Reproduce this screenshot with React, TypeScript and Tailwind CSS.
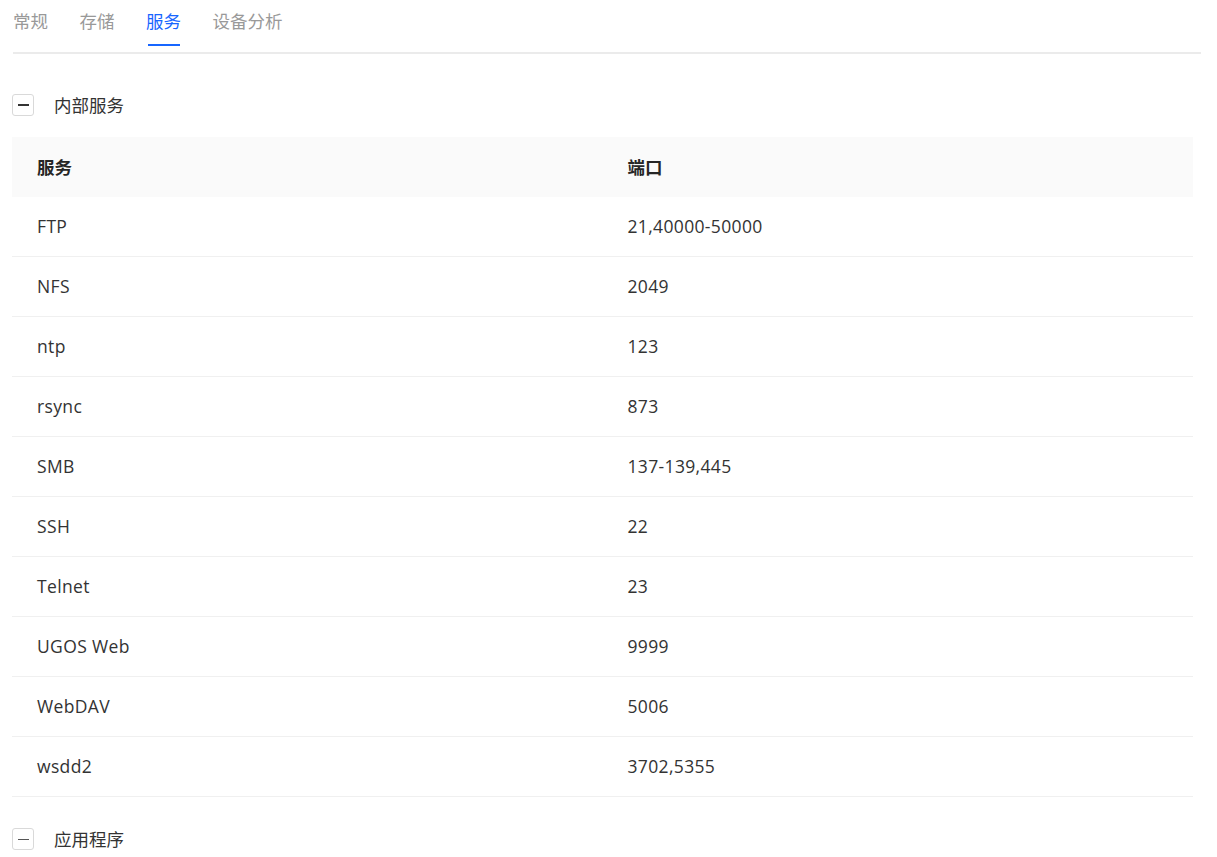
import type { ReactNode } from 'react'

const tabs = ['常规', '存储', '服务', '设备分析']

const services = [
  { name: 'FTP', port: '21,40000-50000' },
  { name: 'NFS', port: '2049' },
  { name: 'ntp', port: '123' },
  { name: 'rsync', port: '873' },
  { name: 'SMB', port: '137-139,445' },
  { name: 'SSH', port: '22' },
  { name: 'Telnet', port: '23' },
  { name: 'UGOS Web', port: '9999' },
  { name: 'WebDAV', port: '5006' },
  { name: 'wsdd2', port: '3702,5355' },
]

function Toggle({ bold }: { bold?: boolean }) {
  return (
    <button className="w-[22px] h-[22px] rounded-[3px] border border-[#d9d9d9] bg-white flex items-center justify-center shrink-0">
      <span className={bold ? 'block w-[11px] h-[2px] bg-[#333]' : 'block w-[11px] h-px bg-[#555]'} />
    </button>
  )
}

function Section({ title, bold, children }: { title: string; bold?: boolean; children?: ReactNode }) {
  return (
    <div>
      <div className="flex items-center gap-[20px] h-[22px]">
        <Toggle bold={bold} />
        <span className="text-[#333]">{title}</span>
      </div>
      {children}
    </div>
  )
}

export default function App() {
  return (
    <div
      className="min-h-screen bg-white text-[17.5px] text-[#333]"
      style={{ fontFamily: '"Open Sans", "Noto Sans CJK SC", sans-serif' }}
    >
      <div className="ml-[13px] mr-[16px] flex gap-[31.5px] border-b-2 border-[#ebebeb]">
        {tabs.map((t) => {
          const active = t === '服务'
          return (
            <div key={t} className="flex flex-col items-center pt-[9px] pb-[6px] cursor-pointer">
              <span className={`leading-[24px] ${active ? 'text-[#1766ff]' : 'text-[#999]'}`}>{t}</span>
              <span className={`mt-[11px] h-[2px] w-[32px] ${active ? 'bg-[#1766ff]' : 'bg-transparent'}`} />
            </div>
          )
        })}
      </div>

      <div className="ml-[12px] mr-[24px] pt-[40px]">
        <Section title="内部服务" bold>
          <div className="mt-[21px]">
            <div className="grid grid-cols-2 h-[60px] items-center bg-[#fafafa] font-bold text-[#262626]">
              <div className="px-[25px]">服务</div>
              <div className="px-[25px]">端口</div>
            </div>
            {services.map((s) => (
              <div
                key={s.name}
                className="grid grid-cols-2 h-[60px] items-center border-b border-[#f0f0f0] tracking-[0.35px]"
              >
                <div className="px-[25px]">{s.name}</div>
                <div className="px-[25px]">{s.port}</div>
              </div>
            ))}
          </div>
        </Section>

        <div className="mt-[31px]">
          <Section title="应用程序" />
        </div>
      </div>
    </div>
  )
}
